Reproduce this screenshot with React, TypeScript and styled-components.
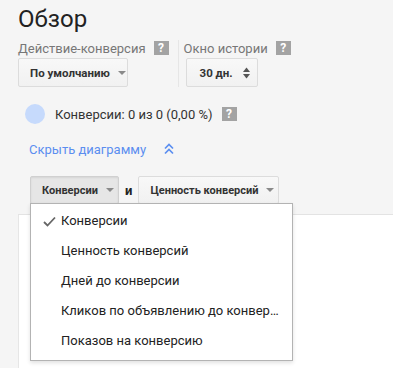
import React from "react";
import styled, { createGlobalStyle, css } from "styled-components";

const GlobalStyle = createGlobalStyle`
  html, body { margin: 0; padding: 0; }
  body {
    background: #f5f5f5;
    font-family: Roboto, "Liberation Sans", Arial, sans-serif;
    color: #222;
  }
  * { box-sizing: border-box; }
`;

const Page = styled.div`
  width: 393px;
  height: 368px;
  overflow: hidden;
  padding-top: 4px;
`;

const Title = styled.h1`
  margin: 0 0 6px 18px;
  font-size: 24px;
  line-height: 30px;
  font-weight: 400;
  color: #222;
`;

const Controls = styled.div`
  display: flex;
  padding-left: 18px;
`;

const Field = styled.div<{ $divided?: boolean }>`
  display: flex;
  flex-direction: column;
  align-items: flex-start;
  padding-right: 8px;
  ${(p) =>
    p.$divided &&
    css`
      border-left: 1px solid #e6e6e6;
      padding-left: 5px;
      margin-left: 1px;
    `}
`;

const FieldLabel = styled.div`
  display: flex;
  align-items: center;
  gap: 8px;
  height: 16px;
  font-size: 13px;
  color: #777;
  white-space: nowrap;
`;

const Help = styled.span`
  display: inline-flex;
  align-items: center;
  justify-content: center;
  width: 15px;
  height: 14px;
  background: #a3a3a3;
  color: #fff;
  font-size: 12px;
  font-weight: 700;
  line-height: 14px;
`;

const SelectButton = styled.button<{ $width: number; $indent?: number; $shift?: number }>`
  display: flex;
  align-items: center;
  justify-content: space-between;
  margin-top: 2px;
  margin-left: ${(p) => p.$shift ?? 0}px;
  width: ${(p) => p.$width}px;
  height: 29px;
  padding: 0 7px 0 ${(p) => p.$indent ?? 11}px;
  border: 1px solid #dcdcdc;
  border-radius: 2px;
  background: linear-gradient(#f8f8f8, #f1f1f1);
  font-family: inherit;
  font-size: 11.5px;
  font-weight: 700;
  color: #333;
  white-space: nowrap;
  cursor: pointer;
`;

const Caret = styled.span`
  display: inline-block;
  flex: none;
  width: 0;
  height: 0;
  border-left: 4px solid transparent;
  border-right: 4px solid transparent;
  border-top: 4px solid #8a8a8a;
  margin-left: 8px;
`;

const Summary = styled.div`
  display: flex;
  align-items: center;
  margin-top: 17px;
  padding-left: 25px;
  height: 20px;
`;

const Dot = styled.span`
  width: 20px;
  height: 20px;
  border-radius: 50%;
  background: #c6dafc;
  margin-right: 10px;
`;

const SummaryText = styled.span`
  font-size: 13px;
  color: #333;
  margin-right: 9px;
`;

const ToggleLink = styled.a`
  display: flex;
  align-items: center;
  gap: 18px;
  margin: 15px 0 0 29px;
  height: 20px;
  font-size: 13px;
  color: #5b8ef0;
  text-decoration: none;
  cursor: pointer;
`;

const ChartPanel = styled.div`
  margin: 17px 0 0 18px;
`;

const Toolbar = styled.div`
  display: flex;
  align-items: center;
  padding: 0 0 10px 12px;
  border-bottom: 1px solid #e3e3e3;
  background: #f5f5f5;
`;

const Anchor = styled.div`
  position: relative;
`;

const MetricButton = styled.button<{ $pressed?: boolean; $width: number }>`
  display: flex;
  align-items: center;
  justify-content: space-between;
  width: ${(p) => p.$width}px;
  height: 28px;
  padding: 0 7px 0 11px;
  border: 1px solid #dcdcdc;
  border-radius: 2px;
  font-family: inherit;
  font-size: 11px;
  font-weight: 700;
  color: #333;
  white-space: nowrap;
  cursor: pointer;
  background: linear-gradient(#f8f8f8, #f1f1f1);
  ${(p) =>
    p.$pressed &&
    css`
      background: #e6e6e6;
      border-color: #d0d0d0;
      box-shadow: inset 0 1px 2px rgba(0, 0, 0, 0.08);
    `}
`;

const And = styled.span`
  font-size: 13px;
  font-weight: 700;
  color: #222;
  margin: 0 6px;
`;

const ChartArea = styled.div`
  height: 160px;
  background: #fff;
  border-left: 1px solid #e6e6e6;
`;

const Menu = styled.ul`
  position: absolute;
  top: 27px;
  left: 0;
  z-index: 10;
  width: 263px;
  margin: 0;
  padding: 2px 0 4px;
  list-style: none;
  background: #fff;
  border: 1px solid #b3b3b3;
  box-shadow: 0 2px 4px rgba(0, 0, 0, 0.12);
`;

const MenuItem = styled.li`
  position: relative;
  height: 30px;
  line-height: 30px;
  padding: 0 12px 0 30px;
  font-size: 13px;
  color: #222;
  white-space: nowrap;
  overflow: hidden;
  text-overflow: ellipsis;
  cursor: pointer;
`;

const Check = styled.svg`
  position: absolute;
  left: 12px;
  top: 10px;
`;

const items = [
  "Конверсии",
  "Ценность конверсий",
  "Дней до конверсии",
  "Кликов по объявлению до конверсии",
  "Показов на конверсию",
];

export default function App() {
  return (
    <>
      <GlobalStyle />
      <Page>
        <Title>Обзор</Title>
        <Controls>
          <Field>
            <FieldLabel>
              Действие-конверсия <Help>?</Help>
            </FieldLabel>
            <SelectButton $width={110}>
              <span>По умолчанию</span>
              <Caret />
            </SelectButton>
          </Field>
          <Field $divided>
            <FieldLabel>
              Окно истории <Help>?</Help>
            </FieldLabel>
            <SelectButton $width={72} $indent={13} $shift={2}>
              <span>30 дн.</span>
              <svg width="7" height="12" viewBox="0 0 7 12">
                <polygon points="0,5 3.5,0.5 7,5" fill="#555" />
                <polygon points="0,7 3.5,11.5 7,7" fill="#555" />
              </svg>
            </SelectButton>
          </Field>
        </Controls>
        <Summary>
          <Dot />
          <SummaryText>Конверсии: 0 из 0 (0,00 %)</SummaryText>
          <Help>?</Help>
        </Summary>
        <ToggleLink>
          Скрыть диаграмму
          <svg width="10" height="12" viewBox="0 0 10 12">
            <polyline points="1,5.5 5,1.5 9,5.5" fill="none" stroke="#5b8ef0" strokeWidth="1.7" />
            <polyline points="1,10.5 5,6.5 9,10.5" fill="none" stroke="#5b8ef0" strokeWidth="1.7" />
          </svg>
        </ToggleLink>
        <ChartPanel>
          <Toolbar>
            <Anchor>
              <MetricButton $pressed $width={89}>
                <span>Конверсии</span>
                <Caret />
              </MetricButton>
              <Menu>
                {items.map((it, i) => (
                  <MenuItem key={it}>
                    {i === 0 && (
                      <Check width="13" height="11" viewBox="0 0 13 11">
                        <polyline points="1,6 4.5,9.5 12,1.5" fill="none" stroke="#666" strokeWidth="1.8" />
                      </Check>
                    )}
                    {it}
                  </MenuItem>
                ))}
              </Menu>
            </Anchor>
            <And>и</And>
            <MetricButton $width={141}>
              <span>Ценность конверсий</span>
              <Caret />
            </MetricButton>
          </Toolbar>
          <ChartArea />
        </ChartPanel>
      </Page>
    </>
  );
}
